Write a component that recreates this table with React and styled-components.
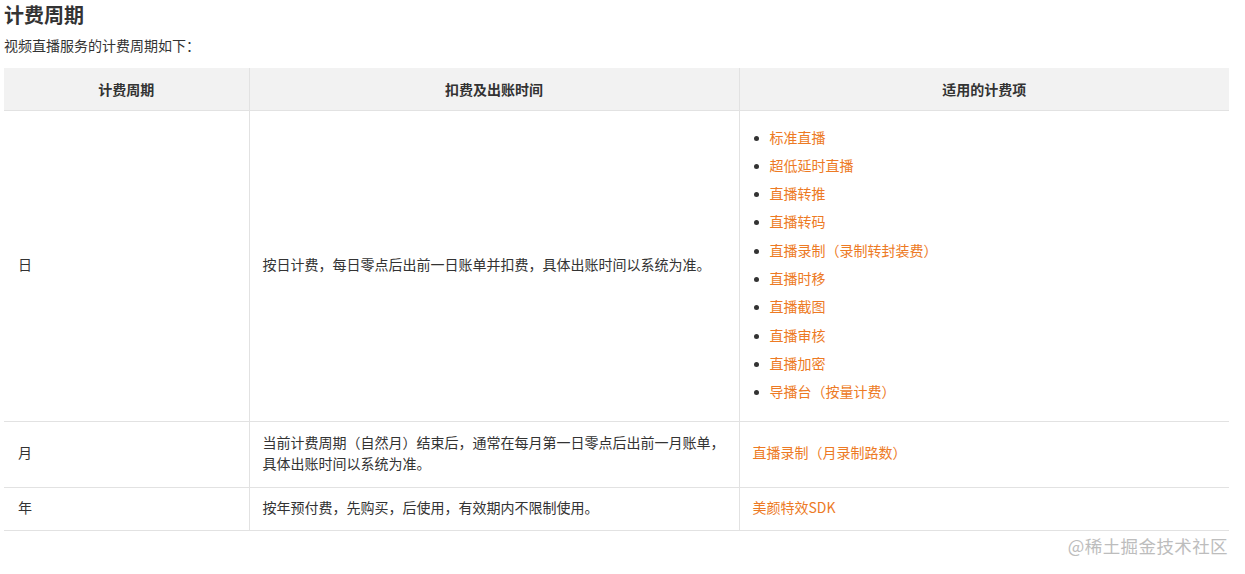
import React from "react";
import styled, { createGlobalStyle } from "styled-components";

const Global = createGlobalStyle`
  html, body { margin: 0; padding: 0; background: #fff; }
  body { font-family: "Noto Sans CJK SC", "Noto Sans", sans-serif; color: #333; }
`;

const Page = styled.div`
  position: relative;
  width: 1245px;
  height: 574px;
  padding: 3px 16px 0 4px;
  box-sizing: border-box;
`;

const Title = styled.h2`
  margin: 0;
  font-size: 20px;
  line-height: 24px;
  font-weight: 700;
  color: #333;
`;

const Intro = styled.p`
  margin: 8px 0 13px;
  font-size: 14px;
  line-height: 20px;
  color: #333;
`;

const Table = styled.table`
  width: 1225px;
  border-collapse: collapse;
  table-layout: fixed;
  font-size: 14px;
  color: #333;
`;

const Th = styled.th`
  background: #f2f2f2;
  font-weight: 700;
  text-align: center;
  height: 42px;
  padding: 0 13px;
  line-height: 21px;
  border-bottom: 1px solid #e2e2e2;
  border-left: 1px solid #e2e2e2;
  &:first-child { border-left: none; }
`;

const Td = styled.td`
  padding: ${(p) => p.$top || "9px"} 13px ${(p) => p.$bottom || "13px"}
    ${(p) => (p.$first ? "14px" : "13px")};
  line-height: 21px;
  vertical-align: middle;
  border-bottom: 1px solid #e2e2e2;
  border-left: ${(p) => (p.$first ? "none" : "1px solid #e2e2e2")};
`;

const List = styled.ul`
  margin: 2.5px 0;
  padding-left: 17px;
  list-style: disc;
  color: #333;
`;

const Item = styled.li`
  line-height: 28.33px;
  &::marker { font-size: 12px; }
`;

const Link = styled.span`
  color: #ed7a24;
`;

const Watermark = styled.div`
  position: absolute;
  right: 17px;
  top: 534px;
  font-size: 17.5px;
  line-height: 24px;
  color: #bdbdbd;
  letter-spacing: 0.4px;
`;

const dayItems = [
  "标准直播",
  "超低延时直播",
  "直播转推",
  "直播转码",
  "直播录制（录制转封装费）",
  "直播时移",
  "直播截图",
  "直播审核",
  "直播加密",
  "导播台（按量计费）",
];

export default function App() {
  return (
    <>
      <Global />
      <Page>
        <Title>计费周期</Title>
        <Intro>视频直播服务的计费周期如下：</Intro>
        <Table>
          <colgroup>
            <col style={{ width: "245px" }} />
            <col style={{ width: "490px" }} />
            <col style={{ width: "490px" }} />
          </colgroup>
          <thead>
            <tr>
              <Th>计费周期</Th>
              <Th>扣费及出账时间</Th>
              <Th>适用的计费项</Th>
            </tr>
          </thead>
          <tbody>
            <tr>
              <Td $first>日</Td>
              <Td>按日计费，每日零点后出前一日账单并扣费，具体出账时间以系统为准。</Td>
              <Td>
                <List>
                  {dayItems.map((t) => (
                    <Item key={t}>
                      <Link>{t}</Link>
                    </Item>
                  ))}
                </List>
              </Td>
            </tr>
            <tr>
              <Td $first $top="9.5px" $bottom="13.5px">月</Td>
              <Td $top="9.5px" $bottom="13.5px">
                当前计费周期（自然月）结束后，通常在每月第一日零点后出前一月账单，
                <br />
                具体出账时间以系统为准。
              </Td>
              <Td $top="9.5px" $bottom="13.5px">
                <Link>直播录制（月录制路数）</Link>
              </Td>
            </tr>
            <tr>
              <Td $first $top="8.5px" $bottom="12.5px">年</Td>
              <Td $top="8.5px" $bottom="12.5px">按年预付费，先购买，后使用，有效期内不限制使用。</Td>
              <Td $top="8.5px" $bottom="12.5px">
                <Link>美颜特效SDK</Link>
              </Td>
            </tr>
          </tbody>
        </Table>
        <Watermark>@稀土掘金技术社区</Watermark>
      </Page>
    </>
  );
}
